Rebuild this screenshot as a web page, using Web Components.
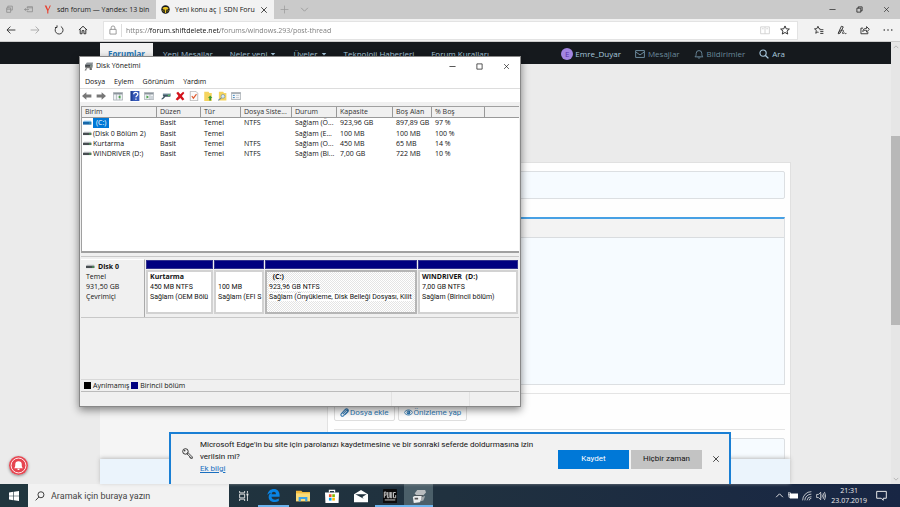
<!DOCTYPE html>
<html lang="tr">
<head>
<meta charset="utf-8">
<title>Yeni konu aç | SDN Forum</title>
<style>
html,body{margin:0;height:100%;overflow:hidden}
body{font-family:"Open Sans","Noto Sans",sans-serif;font-size:8px;line-height:12px;color:#222;--ui:Roboto,"Open Sans",sans-serif}
</style>
</head>
<body>
<desktop-screen></desktop-screen>
<script>
const base = `*{box-sizing:border-box}
button,input,textarea{font:inherit;color:inherit;margin:0;padding:0;border:0;background:none;border-radius:0;outline:0}
button{display:inline-flex;align-items:center;justify-content:center;white-space:nowrap}
a{color:inherit;text-decoration:none}`;
function define(name, css, html, setup) {
  const t = document.createElement('template');
  t.innerHTML = `<style>${base}${css}</style>${html}`;
  customElements.define(name, class extends HTMLElement {
    constructor() {
      super();
      this.attachShadow({mode: 'open'}).append(t.content.cloneNode(true));
    }
    connectedCallback() { if (setup) setup(this, this.shadowRoot); }
  });
}
const L = (d, w = 1.3) => `<path d="${d}" fill="none" stroke="currentColor" stroke-width="${w}"/>`;
const icons = {
  tabs: L('M5 5V2h8v7h-3M3 5h7v8H3zM3 7.500h7'),
  setaside: L('M6 6V3h9v9H6v-2M6 5h9M1 8h8M4 5.500L1 8l3 2.500'),
  yandex: `<path d="M3 1h3l3 7 3-7h2L9.500 10v5h-2v-5z" fill="#e8402f"/>`,
  sdn: `<circle cx="8" cy="8" r="7.500" fill="#17191c"/><path d="M2.500 5.500l3.500-2h4l3.500 2-1.500 2.500H9.500l-.5 6H7L6.500 8H4z" fill="#e8c31e"/><path d="M2 9l2.500 1v2.500zM14 9l-2.500 1v2.500z" fill="#e8c31e"/>`,
  close: L('M2.500 2.500l11 11M13.500 2.500l-11 11', 1.5),
  plus: L('M8 1v14M1 8h14'),
  down: L('M2 5l6 6 6-6', 1.6),
  up: L('M2 11l6-6 6 6', 1.6),
  min: L('M1 8h14', 1.6),
  max: L('M2 2h12v12H2z', 1.6),
  restore: L('M5 5V2h9v9h-3M2 5h9v9H2z', 1.8),
  back: L('M15 8H2M7 2.500L1.500 8 7 13.500', 1.5),
  forward: L('M1 8h13M9 2.500L14.500 8 9 13.500', 1.5),
  reload: L('M4.500 3A6.300 6.300 0 1 0 11 2.500M4.800.5V4H1.500', 1.5),
  home: L('M1.500 8L8 2l6.500 6M3.500 7v7h3V9h3v5h3V7', 1.6),
  lock: L('M3 7h10v7.500H3zM5 7V4.500a3 3 0 0 1 6 0V7', 1.3),
  book: L('M1 3h14v11H1zM8 3v11M3 6h3M10 6h3'),
  star: L('M8 1.500l2 4.600 5 .4-3.800 3.200 1.200 4.800L8 12l-4.400 2.500 1.200-4.800L1 6.500l5-.4z', 1.6),
  favs: L('M10 6L8 5.800 6.300 2 4.600 5.800.8 6.200l3 2.600-1 4.400 3.500-2.200 1 .7M9 7.500h6M10 10.500h5M10 13.500h5', 1.5),
  pen: L('M2 13L7 2l3 1-5 10-3 1c1-4 6-7 8-5.500S7 13 9 13.500s3-2 3.500-.5 1.500.5 2.500.5', 1.5),
  share: L('M5 5H1.500v9h11v-3M4.500 10.500c0-4 3-5 6-5V2.500L15 7l-4.500 4.200V8.500c-3 0-4.500 0-6 2z', 1.5),
  dots: `<g fill="currentColor"><circle cx="2" cy="8" r="1.300"/><circle cx="8" cy="8" r="1.300"/><circle cx="14" cy="8" r="1.300"/></g>`,
  mail: L('M1 2.500h14v11H1zM1 4.500l7 5 7-5', 1.6),
  bell: L('M1.500 12.500c2-1.500 2-3 2-5.500a4.500 4.500 0 0 1 9 0c0 2.500 0 4 2 5.500zM6.500 13.500c.5 2 2.500 2 3 0', 1.5),
  search: `<circle cx="6.500" cy="6.500" r="5" fill="none" stroke="currentColor" stroke-width="1.800"/>${L('M10 10l5 5', 2.2)}`,
  find: `<circle cx="9.500" cy="6" r="4.800" fill="none" stroke="currentColor" stroke-width="1.500"/>${L('M6.300 9.500L1 15', 1.5)}`,
  caret: `<path d="M2 5h12l-6 7z" fill="currentColor"/>`,
  disk: `<path d="M2 5l3-4h11l-1 5H2z" fill="#8b9196"/><path d="M2 5h13v5H2z" fill="#42474b"/><path d="M5 8h8l-1 3H5l-1 4H1z" fill="#777"/><path d="M11 6h3v2h-3z" fill="#bfe0c5"/><path d="M10 11h4v3h-4z" fill="#555"/>`,
  drive: `<path d="M0 5l2-2h12l1 2z" fill="#b4babe"/><path d="M0 5h15v4H0z" fill="#474c50"/><path d="M11 6h3v2h-3z" fill="#4bd05a"/>`,
  driveblue: `<path d="M0 5l2-2h12l1 2z" fill="#6db7ee"/><path d="M0 5h15v5H0z" fill="#1766a8"/><path d="M11 6h3v2h-3z" fill="#43b7b0"/>`,
  aleft: `<path d="M0 8l7-6v3.500h8v5H7V14z" fill="#777"/>`,
  aright: `<path d="M16 8L9 2v3.500H1v5h8V14z" fill="#777"/>`,
  paneleft: `<path d="M.5 2.500h15v12H.5z" fill="#eef1f4" stroke="#8d959c"/><path d="M1 3h14v2.500H1z" fill="#8d959c"/><path d="M5.500 5v9M10.500 5v9" stroke="#9ba3aa"/><path d="M12 7v5L8 9.500z" fill="#3c9b3a"/>`,
  help: `<path d="M1 0h14v16H1z" fill="#3558b8"/><path d="M1 0h3v16H1z" fill="#213f92"/><path d="M6 5c0-4 6.500-4 6.500 0C12.500 7.500 9.500 7.500 9.500 10M9.500 12v2" fill="none" stroke="#fff" stroke-width="2"/>`,
  paneright: `<path d="M.5 2.500h15v11H.5z" fill="#eef1f4" stroke="#8d959c"/><path d="M1 3h14v2.500H1z" fill="#8d959c"/><path d="M9.500 5v9" stroke="#9ba3aa"/><path d="M4 7v5l4-2.500z" fill="#3c9b3a"/><path d="M10 8h5v5h-5z" fill="#cdd3d8"/>`,
  rescan: `<path d="M3 4h13l-1 4H3z" fill="#8199a6"/><path d="M3 6h12v3H7l-4 4H0l4-4z" fill="#3f5663"/><path d="M11 6h3v2h-3z" fill="#55c55d"/>`,
  del: `<path d="M2 3l3-2 3.500 4L13 1l2 2-4 5 4 5-3 2-3.500-4L4 15l-3-2 4.500-5z" fill="#d3141d"/>`,
  check: `<path d="M2 .5h9l3 3v12H2z" fill="#fafafa" stroke="#999"/><path d="M4.500 8l2.500 3.500L12 5" fill="none" stroke="#e0582b" stroke-width="1.800"/>`,
  folderup: `<path d="M2 1h7l1 2h4v13H2z" fill="#f5d45e"/><path d="M10 15V11H8l3.500-4L15 11h-2v4z" fill="#3f9b32"/>`,
  folderfind: `<path d="M3 1h7l1 2h4v12H3z" fill="#f5d45e"/><circle cx="9.500" cy="8.500" r="3" fill="#d9ebf5" stroke="#6f8ca0"/><path d="M7 11l-5 4" stroke="#6f8ca0" stroke-width="2"/>`,
  list: `<path d="M.5 2.500h15v11H.5z" fill="#f4f6f8" stroke="#858d94"/><path d="M1 3h14v1.500H1z" fill="#9aa2a9"/><path d="M3 7h3M3 10.500h3" stroke="#3682bd" stroke-width="1.500"/><path d="M8 7h5M8 10.500h5" stroke="#b0b7bd"/>`,
  clip: L('M5 11l6-6.500c1.500-1.500 3.300.3 2 2L6.500 13.500c-3 3-6.500-.5-4-3.500L9 3c3.500-3.500 8 .5 4.500 4.500L9 12', 1.8),
  eye: `<path d="M.5 8C4 2 12 2 15.500 8 12 14 4 14 .5 8z" fill="none" stroke="currentColor" stroke-width="1.600"/><circle cx="8" cy="8" r="3.400" fill="currentColor"/><circle cx="7" cy="7" r="1" fill="#fff"/>`,
  key: `<circle cx="5" cy="5" r="4" fill="none" stroke="currentColor" stroke-width="1.200"/><circle cx="4" cy="4" r="1" fill="currentColor"/>${L('M8.500 6.500L15 13v2h-2.500v-1.500H11V12L7 8.500', 1.1)}`,
  alert: `<circle cx="16" cy="16" r="16" fill="#e64550"/><circle cx="16" cy="16" r="12.500" fill="none" stroke="#fff" stroke-width="1.500"/><path d="M8.500 20.500c2-1.500 2-3 2-6a5.500 5.500 0 0 1 11 0c0 3 0 4.500 2 6zM14 21.500h4c0 3-4 3-4 0z" fill="#fff"/>`,
  windows: `<path d="M0 2.300L7 1.300v6.200H0zM8 1.200L16 0v7.500H8zM0 8.500h7v6.200l-7-1zM8 8.500h8V16l-8-1.200z" fill="#fff"/>`,
  taskview: L('M1 0v3h8V0M1 5h8v6H1zM1 16v-3h8v3M13.500 0v3M13.500 6v10', 1.4) + `<path d="M12 4h3v3h-3z" fill="currentColor"/>`,
  edge: `<path d="M.5 7.500C1 2.500 4.500 0 8.500 0c4.500 0 7 3.200 7 7.500v2H5.500c.2 4 5.500 4.500 9 2.300v3C9 17.500 2 15.700 2 9.800c0-2.600 1.500-4.500 3.500-5.300-2.200.2-4 1.500-5 3zM5.700 6.500H11C11 2.500 6 2.600 5.700 6.500z" fill="#0a84e4"/>`,
  explorer: `<path d="M0 2h6l1.500 1.500H16V14H0z" fill="#f2b93b"/><path d="M0 5h16v9H0z" fill="#fbdc78"/><path d="M3 14V9h10v5h-2.500v-2.500h-5V14z" fill="#3da3e6"/>`,
  store: `<path d="M0 4h16l-.5 12H.5z" fill="#fff"/><path d="M5 4V1.500h6V4" fill="none" stroke="#fff" stroke-width="1.300"/><path d="M4.500 6h3v3.200h-3z" fill="#f25022"/><path d="M8.300 6h3v3.200h-3z" fill="#7fba00"/><path d="M4.500 10h3v3.200h-3z" fill="#00a4ef"/><path d="M8.300 10h3v3.200h-3z" fill="#ffb900"/>`,
  mailapp: `<path d="M0 6l8-5 8 5v9H0z" fill="#fff"/><path d="M1.500 6h13L9.500 9 11 11z" fill="#20323d"/>`,
  pubg: `<rect width="16" height="16" rx="1" fill="#0b0b0c"/><path d="M1.500 10V3.500h2V7h-2M5 3.500V10h2V3.500M8.500 3.500V10H10V3.500M14.500 4H12v6h2.500V7M2 12.500h12" fill="none" stroke="#c9c9c9" stroke-width="1.100"/>`,
  diskapp: `<path d="M3 5l3-4h9l1 3-3 3H5z" fill="#b9bdbf"/><path d="M2 7h11l-1 2H3z" fill="#4a4f52"/><path d="M1 9l2-1h8v3l-2 4-7 1z" fill="#eceeee"/><path d="M11 9l4-1-2 5-3 1z" fill="#a1a7aa"/><path d="M3 10h4v2H3z" fill="#555"/>`,
  battery: `<path d="M3 4h13v8H3z" fill="#fff"/><path d="M0 3h4v3H0zM1.500 6v4h3" fill="none" stroke="#fff" stroke-width="1.200"/>`,
  wifi: L('M1 15A14 14 0 0 1 15 1M4.500 15A10.500 10.500 0 0 1 15 5M8 15a7 7 0 0 1 7-6M11.500 15a4 4 0 0 1 3.500-3.500', 1.2),
  sound: L('M1 5.500h3L7.500 2v12L4 10.500H1zM9.500 5.500q1.500 2.500 0 5M11.500 3.500q3 4.500 0 9M13.500 1.500q4 6.500 0 13', 1.2),
  chat: L('M1 2h14v10H10.500v3l-3-3H1z', 1.4)
};
customElements.define('ui-icon', class extends HTMLElement {
  connectedCallback() {
    if (this.shadowRoot) return;
    const n = this.getAttribute('name'), b = n === 'alert' ? 32 : 16;
    this.attachShadow({mode: 'open'}).innerHTML =
      `<style>:host{display:inline-block;flex:none;width:var(--s,9px);height:var(--s,9px)}svg{display:block;width:100%;height:100%}</style><svg viewBox="0 0 ${b} ${b}" aria-hidden="true">${icons[n]}</svg>`;
  }
});

define('tab-strip', `
:host{display:flex;height:19px;background:#cacaca;color:#222;font-size:7px}
.set{display:flex;align-items:center;gap:10px;padding:0 9px 0 5px;color:#888}
.tab{flex:0 0 118px;display:flex;align-items:center;min-width:0}
.tab button:first-child{flex:1;min-width:0;gap:5px;padding-left:5px;justify-content:flex-start;height:100%}
.tab span{white-space:nowrap}
.on{background:#f2f2f2;color:#111}
.tab .x{padding:0 6px 0 0;--s:8px}
.first{flex-basis:114px}
.tab.first button{padding-left:1px;gap:5px}
.more{display:flex;align-items:center;gap:11px;padding-left:6px;color:#999}
.win{margin-left:auto;display:flex;align-items:center;gap:20px;padding-right:10px;--s:7px}
`, `<div class="set"><button aria-label="Sekmeler"><ui-icon name="tabs"></ui-icon></button><button aria-label="Kenara ayır"><ui-icon name="setaside"></ui-icon></button></div>
<div class="tab first"><button><ui-icon name="yandex"></ui-icon><span>sdn forum — Yandex: 13 bin</span></button></div>
<div class="tab on"><button><ui-icon name="sdn"></ui-icon><span>Yeni konu aç | SDN Foru</span></button><button class="x" aria-label="Sekmeyi kapat"><ui-icon name="close"></ui-icon></button></div>
<div class="more"><button aria-label="Yeni sekme"><ui-icon name="plus"></ui-icon></button><button aria-label="Önizlemeler"><ui-icon name="down"></ui-icon></button></div>
<div class="win"><button aria-label="Küçült"><ui-icon name="min"></ui-icon></button><button aria-label="Geri yükle"><ui-icon name="restore"></ui-icon></button><button aria-label="Kapat"><ui-icon name="close"></ui-icon></button></div>`);

define('address-bar', `
:host{display:flex;align-items:center;height:23px;background:#f2f2f2;color:#333;border-bottom:1px solid #ccc;--s:10px}
.nav{display:flex;gap:14px;padding:0 15px 0 6px}
.nav button:nth-child(2){color:#aaa}
.field{flex:1;display:flex;align-items:center;height:19px;background:#fff;border:1px solid #e3e3e3;padding:0 7px 0 4px;gap:4px}
.lock{color:#888;padding-right:3px;border-right:1px solid #ddd;height:13px}
input{flex:1;height:17px;font-size:7px;color:transparent;background:linear-gradient(90deg,#777 23px,#111 23px,#111 94px,#777 94px);-webkit-background-clip:text;background-clip:text}
.field button:nth-of-type(2){color:#ccc}
.field .fav{margin-left:6px}
.tools{display:flex;gap:13px;padding:0 7px 0 16px}
`, `<div class="nav"><button aria-label="Geri"><ui-icon name="back"></ui-icon></button><button aria-label="İleri"><ui-icon name="forward"></ui-icon></button><button aria-label="Yenile"><ui-icon name="reload"></ui-icon></button><button aria-label="Giriş"><ui-icon name="home"></ui-icon></button></div>
<div class="field"><button class="lock" aria-label="Site bilgisi"><ui-icon name="lock"></ui-icon></button><input aria-label="Adres" value="https://forum.shiftdelete.net/forums/windows.293/post-thread"><button aria-label="Okuma görünümü"><ui-icon name="book"></ui-icon></button><button class="fav" aria-label="Sık kullanılanlara ekle"><ui-icon name="star"></ui-icon></button></div>
<div class="tools"><button aria-label="Sık kullanılanlar"><ui-icon name="favs"></ui-icon></button><button aria-label="Not ekle"><ui-icon name="pen"></ui-icon></button><button aria-label="Paylaş"><ui-icon name="share"></ui-icon></button><button aria-label="Diğer"><ui-icon name="dots"></ui-icon></button></div>`);

define('forum-nav', `
:host{display:flex;align-items:center;height:22px;background:#15191d;color:#a8c8de;font-size:8px;padding:0 106px 0 100px;white-space:nowrap}
a{display:flex;align-items:center;gap:3px;height:100%;padding-top:1px}
nav,.user{display:flex;height:100%}
nav{gap:17px}
nav ui-icon{--s:6px}
nav a:first-child{background:#f2f2f2;color:#2677b5;font-weight:700;padding:1px 8px 0;margin:0 -7px 0 0;height:21px;align-self:flex-end}
.user{margin-left:auto;gap:14px;--s:10px}
.user a:nth-child(2),.user a:nth-child(3){color:#6b899c}
.av{width:12px;height:12px;border-radius:50%;background:#a385e0;color:#5a34a8;text-align:center;line-height:12px;margin-right:-1px}
`, `<nav><a href="#">Forumlar</a><a href="#">Yeni Mesajlar</a><a href="#">Neler yeni <ui-icon name="caret"></ui-icon></a><a href="#">Üyeler <ui-icon name="caret"></ui-icon></a><a href="#">Teknoloji Haberleri</a><a href="#">Forum Kuralları</a></nav>
<div class="user"><a href="#"><span class="av">E</span>Emre_Duyar</a><a href="#"><ui-icon name="mail"></ui-icon>Mesajlar</a><a href="#"><ui-icon name="bell"></ui-icon>Bildirimler</a><a href="#"><ui-icon name="search"></ui-icon>Ara</a></div>`);

define('forum-page', `
:host{display:flex;flex:1;min-height:0;background:#ebebeb;position:relative}
.page{flex:1;display:flex;flex-direction:column;min-width:0}
.body{flex:1;display:grid;grid-template-columns:228px 1fr;margin:98px 100px 0 100px;min-height:0;overflow:hidden;border-right:1px solid #e0e0e0;border-top:1px solid #e0e0e0}
aside{background:#f5f5f5;border-right:1px solid #e2e2e2}
form{background:#fefefe;padding:8px 5px 0 6px;display:flex;flex-direction:column;min-width:0}
input{background:#f6fbff;border:1px solid #dcdfe2;border-radius:2px;height:28px;flex:none}
.ed{margin-top:18px;border:1px solid #dcdfe2;border-top:2px solid #47a0e4;flex:0 0 168px;display:flex;flex-direction:column}
.bar{height:19px;background:#f3f3f3;border-bottom:1px solid #d9dcdf}
textarea{flex:1;background:#f6fbff;resize:none}
.act{display:flex;gap:3px;margin:8px -5px 0 -6px;padding:10px 6px 8px;border-top:1px solid #e4e4e4}
.act button{height:17px;border:1px solid #dedede;border-radius:2px;padding:0 5px;gap:1px;color:#2f78b2;font-family:var(--ui);font-size:8px;--s:9px}
.tags{margin-top:8px;height:22px}
hr{margin:0;border:0;border-top:1px solid #e4e4e4;width:100%}
.notice{height:25px;margin:0 101px 0 100px;background:#ebf4fc;box-shadow:0 -1px 4px #bbb;z-index:1}
.scroll{width:9px;background:#e6e6e6;display:flex;flex-direction:column;align-items:center;justify-content:space-between;color:#999;padding:2px 0;--s:6px}
.thumb{width:100%;height:189px;margin:86px 0 auto;background:#b8b8b8}
.alert{position:absolute;left:9px;bottom:9px;--s:19px;border-radius:50%;box-shadow:0 1px 3px #888}
`, `<div class="page"><forum-nav></forum-nav><div class="body"><aside></aside><form><input aria-label="Konu başlığı"><div class="ed"><div class="bar"></div><textarea aria-label="Mesaj"></textarea></div><div class="act"><button type="button"><ui-icon name="clip"></ui-icon>Dosya ekle</button><button type="button"><ui-icon name="eye"></ui-icon>Önizleme yap</button></div><hr><input class="tags" aria-label="Etiketler"></form></div><div class="notice"></div></div>
<div class="scroll"><ui-icon name="up"></ui-icon><div class="thumb"></div><ui-icon name="down"></ui-icon></div>
<button class="alert" aria-label="Bildirimlere abone ol"><ui-icon name="alert"></ui-icon></button>`);

define('password-prompt', `
:host{position:absolute;left:169px;right:169px;bottom:23px;height:52px;display:flex;align-items:center;background:#f2f2f2;border:2px solid #1a7fd4;border-bottom:0;padding:0 9px 0 11px;font-family:var(--ui);font-size:8px;line-height:12px;color:#111}
.k{--s:11px;margin-bottom:12px}
p{margin:0 0 4px 7px;width:350px}
a{color:#1a6fc0;text-decoration:underline}
.b{margin-left:auto;display:flex;align-items:center;gap:2px}
.b button{width:71px;height:19px;background:#c3c3c3}
.b .y{background:#0078d7;color:#fff}
.b .x{width:8px;background:none;margin-left:8px;--s:8px}
`, `<ui-icon class="k" name="key"></ui-icon><p>Microsoft Edge'in bu site için parolanızı kaydetmesine ve bir sonraki seferde doldurmasına izin verilsin mi?<br><a href="#">Ek bilgi</a></p><div class="b"><button class="y">Kaydet</button><button>Hiçbir zaman</button><button class="x" aria-label="Kapat"><ui-icon name="close"></ui-icon></button></div>`);

define('volume-table', `
:host{display:block;flex:1;background:#fff;border:1px solid #a0a0a0;border-right:0;border-bottom-width:2px;min-height:0;overflow:hidden}
table{width:100%;border-collapse:separate;border-spacing:0;table-layout:fixed;line-height:10px}
th{font-weight:400;text-align:left;height:11px;background:#f0f0f0;border-right:1px solid #999;border-bottom:1px solid #999;padding:0 0 0 3px;color:#333}
th:last-child{border-right:0}
td{height:10px;padding:0 0 0 3px;white-space:nowrap}
tr:first-child td{padding-bottom:1px}
td:first-child{padding-left:1px}
.n{display:flex;align-items:center;gap:1px}
.sel span{background:#0078d7;color:#fff;padding:0 3px}
`, `<table><colgroup><col style="width:75px"><col style="width:44px"><col style="width:40px"><col style="width:51px"><col style="width:45px"><col style="width:56px"><col style="width:39px"><col style="width:53px"><col></colgroup>
<thead><tr><th>Birim</th><th>Düzen</th><th>Tür</th><th>Dosya Siste...</th><th>Durum</th><th>Kapasite</th><th>Boş Alan</th><th>% Boş</th><th></th></tr></thead><tbody></tbody></table>`, (h, r) => {
  r.querySelector('tbody').innerHTML = [
    ['(C:)', 'NTFS', 'Sağlam (Ö...', '923,96 GB', '897,89 GB', '97 %'],
    ['(Disk 0 Bölüm 2)', '', 'Sağlam (E...', '100 MB', '100 MB', '100 %'],
    ['Kurtarma', 'NTFS', 'Sağlam (O...', '450 MB', '65 MB', '14 %'],
    ['WINDRIVER (D:)', 'NTFS', 'Sağlam (Bi...', '7,00 GB', '722 MB', '10 %']
  ].map(([n, f, s, c, b, p], i) => `<tr><td><div class="n ${i ? '' : 'sel'}"><ui-icon name="${i ? 'drive' : 'driveblue'}"></ui-icon><span>${n}</span></div></td><td>Basit</td><td>Temel</td><td>${f}</td><td>${s}</td><td>${c}</td><td>${b}</td><td>${p}</td><td></td></tr>`).join('');
});

define('disk-partition', `
:host{display:flex;flex-direction:column;gap:1px;min-width:0}
.cap{height:9px;background:#000080;border:1px solid #33338f}
.box{flex:1;border:2px solid #d2d2d2;background:#fff;padding:0 0 0 2px;line-height:10px;overflow:hidden;white-space:pre}
:host([active]) .box{border-color:#b5b5b5;background:repeating-conic-gradient(#e4e4e4 0 25%,#fff 0 50%) 0 0/2px 2px}
:host([active]) .box span{background:#fff}
.box span{font-family:var(--ui)}
b{display:block;height:10px}
`, `<div class="cap"></div><div class="box"><b><slot name="name"></slot></b><span><slot></slot></span></div>`);

define('disk-map', `
:host{display:flex;flex-direction:column;height:124px;border-top:1px solid #c8c8c8;border-bottom:1px solid #d8d8d8;margin-top:3px;background:#f0f0f0}
.row{display:flex;height:61px;border-bottom:1px solid #c8c8c8;padding-top:2px}
.disk{width:64px;border-right:1px solid #aaa;border-top:1px solid #fff;padding:2px 0 0 5px;line-height:10px}
.disk b{display:flex;align-items:center;gap:3px}
.parts{flex:1;display:grid;grid-template-columns:67fr 50fr 152fr 100fr;gap:1px;padding:1px 1px 3px 1px;min-width:0}
`, `<div class="row"><div class="disk"><b><ui-icon name="drive"></ui-icon>Disk 0</b>Temel<br>931,50 GB<br>Çevrimiçi</div><div class="parts"><disk-partition><span slot="name">Kurtarma</span>450 MB NTFS<br>Sağlam (OEM Bölü</disk-partition><disk-partition>100 MB<br>Sağlam (EFI S</disk-partition><disk-partition active><span slot="name">  (C:)</span>923,96 GB NTFS<br>Sağlam (Önyükleme, Disk Belleği Dosyası, Kilit</disk-partition><disk-partition><span slot="name">WINDRIVER  (D:)</span>7,00 GB NTFS<br>Sağlam (Birincil bölüm)</disk-partition></div></div>`);

define('disk-window', `
:host{position:absolute;left:79px;right:379px;top:56px;bottom:100px;display:flex;flex-direction:column;background:#f0f0f0;border:1px solid #888;box-shadow:0 3px 8px #0007;font-size:7px;line-height:10px;color:#111}
.title{display:flex;align-items:center;gap:3px;height:18px;background:#fff;padding:0 10px 0 4px;font-size:7px}
.ctl{margin-left:auto;display:flex;gap:20px;--s:7px}
.menu{display:flex;gap:9px;height:14px;background:#fff;padding-left:5px;border-bottom:1px solid #ddd}
.tools{display:flex;align-items:center;height:13px;background:#fff;padding-left:2px;--s:10px;gap:4px}
.tools .g{margin-left:3px}
.split{height:4px;flex:none}
.legend{display:flex;align-items:center;gap:2px;height:12px;padding-left:3px;border-bottom:1px solid #bbb}
.legend i{width:7px;height:7px;background:#000}
.legend i.p{background:#000080}
.status{height:14px;display:grid;grid-template-columns:312fr 78fr 50fr}
.status i{border-right:1px solid #e2e2e2}
.in{flex:1;display:flex;flex-direction:column;padding:0 1px;min-height:0}
`, `<div class="title"><ui-icon name="disk"></ui-icon>Disk Yönetimi<div class="ctl"><button aria-label="Küçült"><ui-icon name="min"></ui-icon></button><button aria-label="Büyüt"><ui-icon name="max"></ui-icon></button><button aria-label="Kapat"><ui-icon name="close"></ui-icon></button></div></div>
<div class="menu"><button>Dosya</button><button>Eylem</button><button>Görünüm</button><button>Yardım</button></div>
<div class="tools"><button aria-label="Geri"><ui-icon name="aleft"></ui-icon></button><button aria-label="İleri"><ui-icon name="aright"></ui-icon></button><button class="g" aria-label="Konsol ağacı"><ui-icon name="paneleft"></ui-icon></button><button class="g" aria-label="Yardım"><ui-icon name="help"></ui-icon></button><button aria-label="Eylem bölmesi"><ui-icon name="paneright"></ui-icon></button><button class="g" aria-label="Yeniden tara"><ui-icon name="rescan"></ui-icon></button><button aria-label="Sil"><ui-icon name="del"></ui-icon></button><button aria-label="Özellikler"><ui-icon name="check"></ui-icon></button><button aria-label="Yukarı"><ui-icon name="folderup"></ui-icon></button><button aria-label="Ara"><ui-icon name="folderfind"></ui-icon></button><button aria-label="Liste"><ui-icon name="list"></ui-icon></button></div>
<div class="split"></div><div class="in"><volume-table></volume-table><disk-map></disk-map><div class="legend"><i></i>Ayrılmamış<i class="p"></i>Birincil bölüm</div></div><div class="status"><i></i><i></i></div>`);

define('task-bar', `
:host{display:flex;align-items:stretch;height:23px;background:linear-gradient(90deg,#20363e,#20313f 50%,#182644);color:#eee}
.start{width:28px;--s:10px}
label{width:201px;background:#f2f2f2;display:flex;align-items:center;gap:6px;padding-left:7px;color:#333;--s:10px}
input{flex:1;min-width:0;font-family:var(--ui);font-size:9px;height:100%}
input::placeholder{color:#444;opacity:1}
.apps{display:flex;--s:14px}
.apps button{width:29px;border-bottom:2px solid transparent;border-top:2px solid transparent}
.apps .tv{--s:10px}
.apps .run{border-bottom-color:#6cb4ee}
.apps .on{background:#4b5f69;border-top-color:#4b5f69}
.apps button:nth-child(2){width:31px;--s:13px}
.apps button:nth-child(3){width:28px}
.tray{margin-left:auto;display:flex;align-items:center;gap:4px;padding-right:13px;--s:10px}
.tray button:first-child{--s:9px}
time{font-size:7px;line-height:10px;text-align:center;margin:0 5px 0 1px}
.tray button:last-child{--s:11px}
`, `<button class="start" aria-label="Başlat"><ui-icon name="windows"></ui-icon></button><label><ui-icon name="find"></ui-icon><input aria-label="Ara" placeholder="Aramak için buraya yazın"></label>
<div class="apps"><button class="tv" aria-label="Görev görünümü"><ui-icon name="taskview"></ui-icon></button><button class="run" aria-label="Edge"><ui-icon name="edge"></ui-icon></button><button aria-label="Dosya Gezgini"><ui-icon name="explorer"></ui-icon></button><button aria-label="Mağaza"><ui-icon name="store"></ui-icon></button><button aria-label="Posta"><ui-icon name="mailapp"></ui-icon></button><button class="run" aria-label="PUBG"><ui-icon name="pubg"></ui-icon></button><button class="run on" aria-label="Disk Yönetimi"><ui-icon name="diskapp"></ui-icon></button></div>
<div class="tray"><button aria-label="Gizli simgeler"><ui-icon name="up"></ui-icon></button><button aria-label="Pil"><ui-icon name="battery"></ui-icon></button><button aria-label="Ağ"><ui-icon name="wifi"></ui-icon></button><button aria-label="Ses"><ui-icon name="sound"></ui-icon></button><time>21:31<br>23.07.2019</time><button aria-label="Bildirimler"><ui-icon name="chat"></ui-icon></button></div>`);

define('desktop-screen', `:host{display:flex;flex-direction:column;height:100vh;position:relative;overflow:hidden}
tab-strip,address-bar,task-bar{flex:none}disk-window{z-index:2}password-prompt{z-index:1}`,
`<tab-strip></tab-strip><address-bar></address-bar><forum-page></forum-page><task-bar></task-bar><password-prompt></password-prompt><disk-window></disk-window>`);
</script>
</body>
</html>
